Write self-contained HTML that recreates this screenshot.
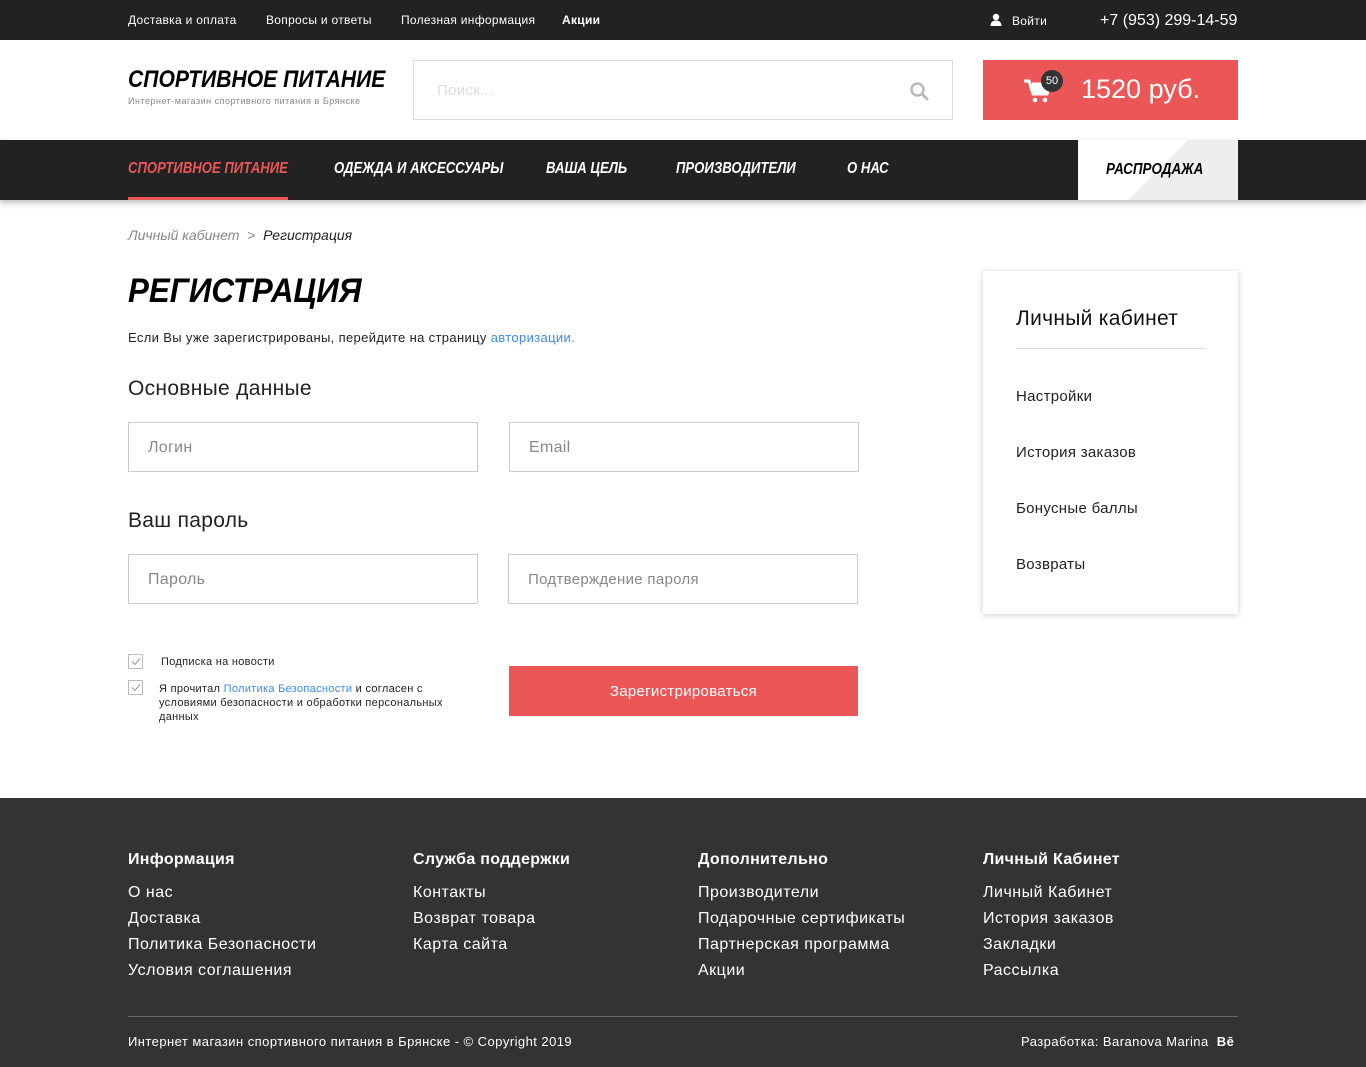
<!DOCTYPE html>
<html><head><meta charset="utf-8"><style>
*{margin:0;padding:0;box-sizing:border-box}
body{width:1366px;height:1067px;font-family:"Liberation Sans",sans-serif;color:#222;background:#fff;position:relative;overflow:hidden;letter-spacing:0.3px}
.a{position:absolute;white-space:nowrap}
.disp{font-weight:bold;font-style:italic;transform-origin:left center;display:inline-block;letter-spacing:0}
.inp{position:absolute;border:1px solid #ccc;height:50px;font-size:16px;color:#888;padding-left:19px;line-height:50px}
.fh{font-size:16px;font-weight:bold;color:#fff}
.fl{font-size:16px;color:#fff;line-height:26px;letter-spacing:0.5px}
</style></head><body>
<div class="a" style="left:0;top:0;width:1366px;height:40px;background:#222"></div>
<div class="a" style="left:128px;top:13px;font-size:12px;color:#fff">Доставка и оплата</div>
<div class="a" style="left:266px;top:13px;font-size:12px;color:#fff">Вопросы и ответы</div>
<div class="a" style="left:401px;top:13px;font-size:12px;color:#fff">Полезная информация</div>
<div class="a" style="left:562px;top:13px;font-size:12px;color:#fff;font-weight:bold">Акции</div>
<svg class="a" style="left:990px;top:13px" width="12" height="14" viewBox="0 0 12 14"><circle cx="6" cy="4" r="3.2" fill="#fff"/><path d="M0.5 13c0-4 2.5-5.5 5.5-5.5s5.5 1.5 5.5 5.5z" fill="#fff"/></svg>
<div class="a" style="left:1012px;top:14px;font-size:12px;color:#fff">Войти</div>
<div class="a" style="left:1100px;top:12px;font-size:16px;color:#fff;letter-spacing:0">+7 (953) 299-14-59</div>

<div class="a" style="left:128px;top:66px"><span class="disp" style="font-size:24px;color:#000;transform:scaleX(0.88)">СПОРТИВНОЕ ПИТАНИЕ</span></div>
<div class="a" style="left:128px;top:96px;font-size:9px;color:#888;letter-spacing:0.5px">Интернет-магазин спортивного питания в Брянске</div>
<div class="a" style="left:413px;top:60px;width:540px;height:60px;border:1px solid #ddd"></div>
<div class="a" style="left:437px;top:82px;font-size:15px;color:#ddd">Поиск...</div>
<svg class="a" style="left:909px;top:81px" width="20" height="20" viewBox="0 0 20 20"><circle cx="8.5" cy="8.5" r="6" stroke="#bbb" stroke-width="2.6" fill="none"/><path d="M13 13l5 5" stroke="#bbb" stroke-width="3" stroke-linecap="round"/></svg>
<div class="a" style="left:983px;top:60px;width:255px;height:60px;background:#eb5757"></div>
<svg class="a" style="left:1024px;top:78px" width="28" height="26" viewBox="0 0 28 26"><path d="M0 3h5l4 13h14l3-10H8" stroke="#fff" stroke-width="3" fill="none"/><path d="M7 6h19l-3 10H10z" fill="#fff"/><circle cx="11" cy="22" r="2.3" fill="#fff"/><circle cx="21" cy="22" r="2.3" fill="#fff"/></svg>
<div class="a" style="left:1041px;top:70px;width:22px;height:22px;border-radius:50%;background:#333;color:#fff;font-size:11px;text-align:center;line-height:22px;letter-spacing:0">50</div>
<div class="a" style="left:1081px;top:74px;font-size:27px;color:#fff;letter-spacing:0">1520 руб.</div>

<div class="a" style="left:0;top:140px;width:1366px;height:60px;background:#222;box-shadow:0 3px 6px rgba(0,0,0,.25)"></div>
<div class="a" style="left:128px;top:197px;width:160px;height:3px;background:#eb5757"></div>
<div class="a" style="left:128px;top:160px"><span class="disp" style="font-size:16px;color:#eb5757;transform:scaleX(0.82)">СПОРТИВНОЕ ПИТАНИЕ</span></div>
<div class="a" style="left:334px;top:160px"><span class="disp" style="font-size:16px;color:#fff;transform:scaleX(0.82)">ОДЕЖДА И АКСЕССУАРЫ</span></div>
<div class="a" style="left:546px;top:160px"><span class="disp" style="font-size:16px;color:#fff;transform:scaleX(0.82)">ВАША ЦЕЛЬ</span></div>
<div class="a" style="left:676px;top:160px"><span class="disp" style="font-size:16px;color:#fff;transform:scaleX(0.82)">ПРОИЗВОДИТЕЛИ</span></div>
<div class="a" style="left:847px;top:160px"><span class="disp" style="font-size:16px;color:#fff;transform:scaleX(0.82)">О НАС</span></div>
<div class="a" style="left:1078px;top:140px;width:160px;height:60px;background:linear-gradient(135deg,#fff 50%,#eee 50%)"></div>
<div class="a" style="left:1106px;top:161px"><span class="disp" style="font-size:16px;color:#000;transform:scaleX(0.84)">РАСПРОДАЖА</span></div>

<div class="a" style="left:128px;top:227px;font-size:14px;color:#888;font-style:italic;letter-spacing:0">Личный кабинет &nbsp;&gt;&nbsp; <span style="color:#222">Регистрация</span></div>
<div class="a" style="left:128px;top:272px"><span class="disp" style="font-size:34px;color:#000;transform:scaleX(0.92)">РЕГИСТРАЦИЯ</span></div>
<div class="a" style="left:128px;top:330px;font-size:13px;color:#222;letter-spacing:0.35px">Если Вы уже зарегистрированы, перейдите на страницу <span style="color:#3d8be8">авторизации.</span></div>
<div class="a" style="left:128px;top:377px;font-size:21px;color:#222">Основные данные</div>
<div class="inp" style="left:128px;top:422px;width:350px">Логин</div>
<div class="inp" style="left:509px;top:422px;width:350px">Email</div>
<div class="a" style="left:128px;top:509px;font-size:21px;color:#222">Ваш пароль</div>
<div class="inp" style="left:128px;top:554px;width:350px">Пароль</div>
<div class="inp" style="left:508px;top:554px;width:350px;font-size:15px">Подтверждение пароля</div>

<svg class="a" style="left:128px;top:654px" width="15" height="15"><rect x=".5" y=".5" width="14" height="14" fill="#fff" stroke="#bbb"/><path d="M4 7.5l3 3 5-6" stroke="#999" fill="none"/></svg>
<div class="a" style="left:161px;top:656px;font-size:11px;color:#222">Подписка на новости</div>
<svg class="a" style="left:128px;top:680px" width="15" height="15"><rect x=".5" y=".5" width="14" height="14" fill="#fff" stroke="#bbb"/><path d="M4 7.5l3 3 5-6" stroke="#999" fill="none"/></svg>
<div class="a" style="left:159px;top:682px;font-size:11px;color:#222;line-height:14px;white-space:normal;width:305px">Я прочитал <span style="color:#3d8be8">Политика Безопасности</span> и согласен с<br>условиями безопасности и обработки персональных данных</div>
<div class="a" style="left:509px;top:666px;width:349px;height:50px;background:#eb5757;color:#fff;font-size:15px;text-align:center;line-height:52px">Зарегистрироваться</div>

<div class="a" style="left:983px;top:271px;width:255px;height:343px;background:#fff;box-shadow:0 1px 6px rgba(0,0,0,.2)"></div>
<div class="a" style="left:1016px;top:307px;font-size:21px;color:#111">Личный кабинет</div>
<div class="a" style="left:1016px;top:348px;width:190px;height:1px;background:#ddd"></div>
<div class="a" style="left:1016px;top:388px;font-size:15px">Настройки</div>
<div class="a" style="left:1016px;top:444px;font-size:15px">История заказов</div>
<div class="a" style="left:1016px;top:500px;font-size:15px">Бонусные баллы</div>
<div class="a" style="left:1016px;top:556px;font-size:15px">Возвраты</div>

<div class="a" style="left:0;top:798px;width:1366px;height:269px;background:#333"></div>
<div class="a fh" style="left:128px;top:851px">Информация</div>
<div class="a fl" style="left:128px;top:880px">О нас<br>Доставка<br>Политика Безопасности<br>Условия соглашения</div>
<div class="a fh" style="left:413px;top:851px">Служба поддержки</div>
<div class="a fl" style="left:413px;top:880px">Контакты<br>Возврат товара<br>Карта сайта</div>
<div class="a fh" style="left:698px;top:851px">Дополнительно</div>
<div class="a fl" style="left:698px;top:880px">Производители<br>Подарочные сертификаты<br>Партнерская программа<br>Акции</div>
<div class="a fh" style="left:983px;top:851px">Личный Кабинет</div>
<div class="a fl" style="left:983px;top:880px">Личный Кабинет<br>История заказов<br>Закладки<br>Рассылка</div>
<div class="a" style="left:128px;top:1016px;width:1110px;height:1px;background:#666"></div>
<div class="a" style="left:128px;top:1034px;font-size:13px;color:#fff;letter-spacing:0.45px">Интернет магазин спортивного питания в Брянске - © Copyright 2019</div>
<div class="a" style="left:1021px;top:1034px;font-size:13px;color:#fff;letter-spacing:0.45px">Разработка: Baranova Marina &nbsp;<b>Bē</b></div>
</body></html>
